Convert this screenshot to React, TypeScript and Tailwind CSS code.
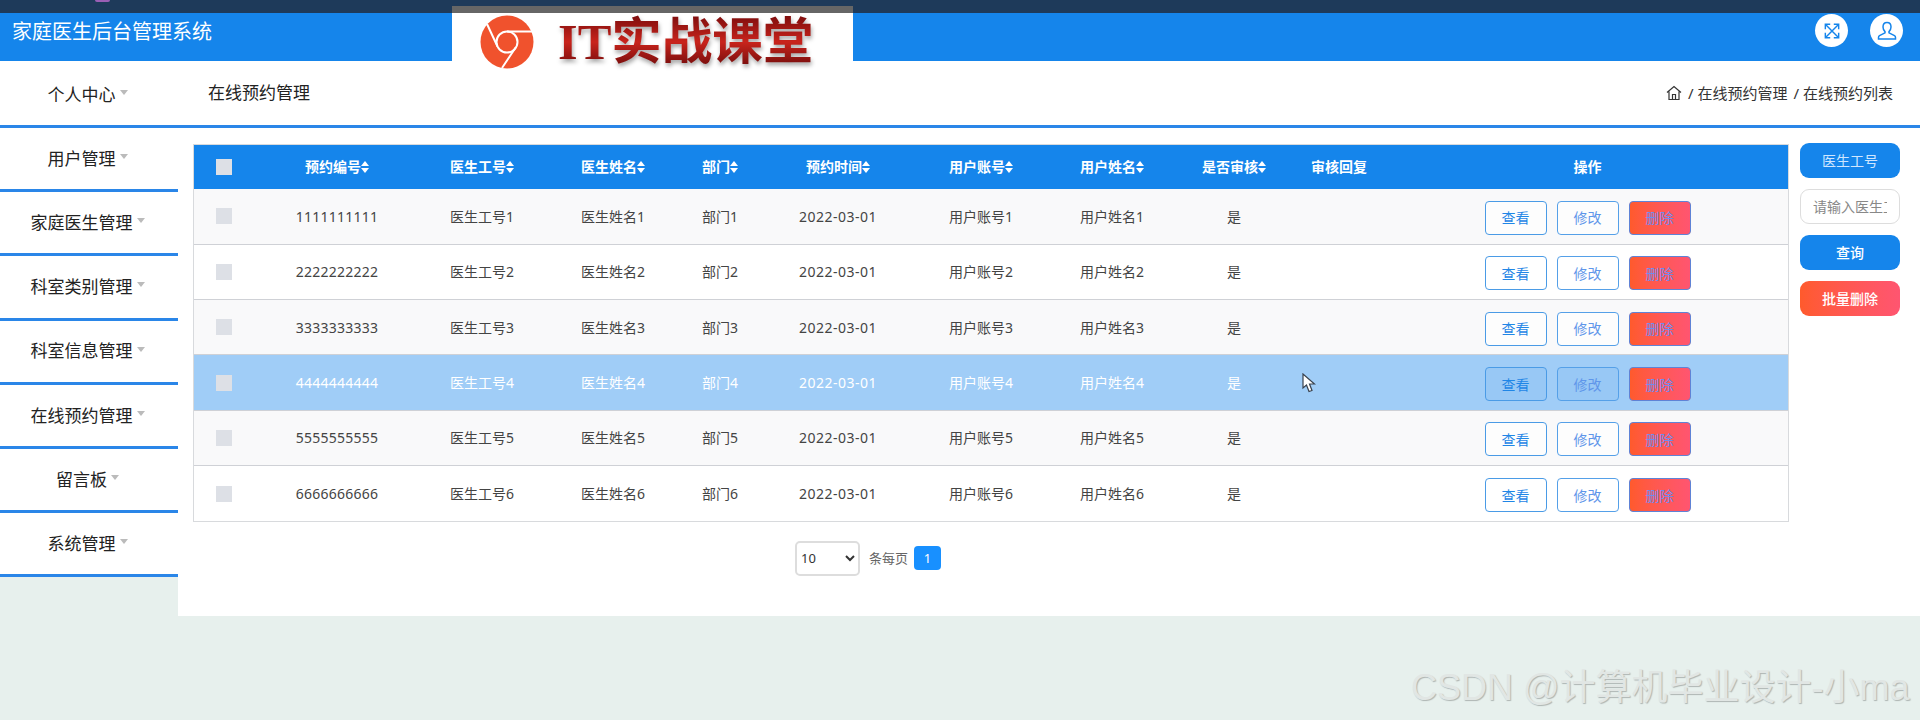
const headers = ["预约编号", "医生工号", "医生姓名", "部门", "预约时间", "用户账号", "用户姓名", "是否审核"];
const menu = ["用户管理", "家庭医生管理", "科室类别管理", "科室信息管理", "在线预约管理", "留言板", "系统管理"];
const rows = [1, 2, 3, 4, 5, 6];

const Caret = () => <span className="ml-[4px] mr-[-3px] mt-[-4px] inline-block border-x-[4px] border-t-[5px] border-x-transparent border-t-[#bbbbbb]" />;

const SortIcon = () => (
    <svg width="8" height="12" viewBox="0 0 8 12" className="inline-block align-[-1px]" fill="white">
        <path d="M4 0 L8 5 H0 Z" />
        <path d="M4 12 L8 7 H0 Z" />
    </svg>
);

const ChromeMark = () => (
    <svg width="54" height="54" viewBox="0 0 54 54">
        <circle cx="27" cy="27" r="26.5" fill="#f0522d" />
        <circle cx="27" cy="27" r="10.5" fill="none" stroke="white" strokeWidth="2" />
        <path d="M27 16.5 H52 M17.5 31.5 L7 9 M36 32 L22 53" stroke="white" strokeWidth="2" fill="none" />
    </svg>
);

const Row = ({ n }: { n: number }) => {
    const active = n === 4;
    const tone = active ? "bg-[#a0cdf7] text-white" : n % 2 === 1 ? "bg-[#f9f9fa] text-[#444444]" : "bg-white text-[#444444]";
    const btn = active ? "bg-[#98c8f5]" : "bg-white/60";
    return (
        <tr className={`h-[55.33px] border-b border-[#cfd1d6] last:border-b-0 text-center ${tone}`}>
            <td>
                <span className="mx-auto block size-4 bg-[#dde0e6]" />
            </td>
            <td className="tracking-[0.25px]">{String(n).repeat(10)}</td>
            <td>医生工号{n}</td>
            <td>医生姓名{n}</td>
            <td>部门{n}</td>
            <td className="tracking-[0.5px]">2022-03-01</td>
            <td>用户账号{n}</td>
            <td>用户姓名{n}</td>
            <td>是</td>
            <td></td>
            <td>
                <div className="mt-[3px] flex items-center justify-center gap-[10px] pr-[3px]">
                    <button className={`h-[34px] w-[62px] rounded-[4px] border border-[#4a9be6] text-[#1f86e6] ${btn}`}>查看</button>
                    <button className={`h-[34px] w-[62px] rounded-[4px] border border-[#55a0e8] text-[#5f96ea] ${btn}`}>修改</button>
                    <button className="h-[34px] w-[62px] rounded-[4px] border border-[#5f83d6] bg-gradient-to-r from-[#ff5a2c] to-[#ff5570] text-[#6f8bf0]">删除</button>
                </div>
            </td>
        </tr>
    );
};

export default function App() {
    return (
        <div className="relative h-[720px] w-[1920px] overflow-hidden bg-[#e7f0ed] font-['Noto_Sans','Noto_Sans_CJK_SC',sans-serif] text-[14px]">
            <div className="h-[13px] bg-[#1e3a5a]">
                <div className="ml-[95px] h-[2px] w-[15px] rounded-b-full bg-[#9a5fb5]" />
            </div>
            <header className="flex h-[48px] items-start justify-between bg-[#1585eb] pl-[12px] pr-[17px]">
                <h1 className="mt-[5px] text-[20px] leading-[28px] font-normal text-white">家庭医生后台管理系统</h1>
                <div className="flex gap-[22px] pt-[1px]">
                    <span className="flex size-[33px] items-center justify-center rounded-full bg-white">
                        <svg width="16" height="16" viewBox="0 0 18 18" fill="none" stroke="#1585eb" strokeWidth="1.6">
                            <path d="M2 2 L16 16 M16 2 L2 16" />
                            <path d="M1.5 7 V1.5 H7 M11 1.5 H16.5 V7 M16.5 11 V16.5 H11 M7 16.5 H1.5 V11" />
                        </svg>
                    </span>
                    <span className="flex size-[33px] items-center justify-center rounded-full bg-white">
                        <svg width="20" height="20" viewBox="0 0 20 20" fill="none" stroke="#1585eb" strokeWidth="1.5">
                            <path d="M10 1.5 C7.5 1.5 6 3.4 6 6 C6 8 7 9.6 8 10.6 V11.8 L2.5 14.6 C1.8 15 1.5 15.6 1.5 16.4 V18 H18.5 V16.4 C18.5 15.6 18.2 15 17.5 14.6 L12 11.8 V10.6 C13 9.6 14 8 14 6 C14 3.4 12.5 1.5 10 1.5 Z" />
                        </svg>
                    </span>
                </div>
            </header>

            <div className="flex items-start">
                <aside className="w-[178px] bg-white text-[17px] text-[#222222]">
                    <div className="flex h-[64px] items-center justify-center pt-[3px] pr-[6px]">
                        个人中心
                        <Caret />
                    </div>
                    <div className="h-[3px] bg-[#2a86e8]" />
                    {menu.map((m) => (
                        <div key={m} className="flex h-[64.2px] items-center justify-center border-b-[3px] border-[#2a86e8] pr-[6px]">
                            {m}
                            <Caret />
                        </div>
                    ))}
                </aside>

                <main className="h-[555px] flex-1 bg-white">
                    <div className="flex h-[67px] items-center justify-between border-b-[3px] border-[#2a86e8] pl-[30px] pr-[27px]">
                        <span className="text-[17px] text-[#222222]">在线预约管理</span>
                        <span className="flex items-center gap-[6px] text-[15px] text-[#333333]">
                            <svg width="16" height="16" viewBox="0 0 16 16" fill="none" stroke="#333333" strokeWidth="1.2">
                                <path d="M1 7.5 L8 1.5 L15 7.5 M3 6.5 V14.5 H13 V6.5 M6.5 14.5 V9.5 H9.5 V14.5" />
                            </svg>
                            <span>/ 在线预约管理</span>
                            <span>/ 在线预约列表</span>
                        </span>
                    </div>

                    <div className="flex items-start pl-[15px]">
                        <div className="mt-[16px]">
                            <div className="w-[1596px] border border-[#d8dadd]">
                                <table className="w-[1594px] table-fixed border-collapse">
                                    <colgroup>
                                        <col className="w-[60px]" />
                                        <col className="w-[166px]" />
                                        <col className="w-[124px]" />
                                        <col className="w-[138px]" />
                                        <col className="w-[76px]" />
                                        <col className="w-[160px]" />
                                        <col className="w-[126px]" />
                                        <col className="w-[136px]" />
                                        <col className="w-[108px]" />
                                        <col className="w-[102px]" />
                                        <col className="w-[398px]" />
                                    </colgroup>
                                    <thead>
                                        <tr className="h-[44px] bg-[#1585eb] text-center font-bold text-white">
                                            <th>
                                                <span className="mx-auto block size-4 bg-[#dde0e6]" />
                                            </th>
                                            {headers.map((h) => (
                                                <th key={h} className="pb-[2px]">
                                                    {h}
                                                    <SortIcon />
                                                </th>
                                            ))}
                                            <th className="pb-[2px]">审核回复</th>
                                            <th className="pb-[2px] pr-[3px]">操作</th>
                                        </tr>
                                    </thead>
                                    <tbody>
                                        {rows.map((n) => (
                                            <Row key={n} n={n} />
                                        ))}
                                    </tbody>
                                </table>
                            </div>
                            <div className="ml-[602px] mt-[19px] flex items-center text-[13px]">
                                <select defaultValue="10" className="h-[35px] w-[65px] rounded-[5px] border-2 border-[#dddddd] text-[#333333]">
                                    <option>10</option>
                                    <option>20</option>
                                </select>
                                <span className="ml-[9px] text-[#666666]">条每页</span>
                                <span className="ml-[6px] flex h-[24px] w-[27px] items-center justify-center rounded-[4px] bg-[#1890ff] text-white">1</span>
                            </div>
                        </div>

                        <div className="ml-[11px] mt-[15px] flex w-[100px] flex-col gap-[11px]">
                            <button className="h-[35px] rounded-[9px] bg-[#1585eb] text-[#cfe6ff]">医生工号</button>
                            <input placeholder="请输入医生工号" className="h-[35px] w-full rounded-[9px] border border-[#dddddd] bg-white px-[12px] placeholder:text-[#888888]" />
                            <button className="h-[35px] rounded-[9px] bg-[#1585eb] font-medium text-white">查询</button>
                            <button className="h-[35px] rounded-[9px] bg-gradient-to-r from-[#ff5a2c] to-[#ff5570] font-medium text-white">批量删除</button>
                        </div>
                    </div>
                </main>
            </div>

            {/* stuff pasted over the recording */}
            <div className="absolute left-[452px] top-[6px] h-[69px] w-[401px] bg-white">
                <div className="h-[7px] bg-[#666666]" />
                <div className="flex items-center pl-[28px] pt-[2px]">
                    <ChromeMark />
                    <span className="ml-[24px] bg-gradient-to-b from-[#7d0d0d] via-[#c9241c] to-[#6e0b0b] bg-clip-text font-['Liberation_Serif','Noto_Sans_CJK_SC',serif] text-[50.5px] font-bold leading-[54px] text-transparent drop-shadow-[1px_3px_2px_rgba(0,0,0,0.35)]">
                        IT实战课堂
                    </span>
                </div>
            </div>

            <svg className="absolute left-[1302px] top-[373px]" width="14" height="20" viewBox="0 0 14 20">
                <path d="M1 1 V15 L4.5 12 L7 18.5 L10 17.5 L7.5 11 H12.5 Z" fill="white" stroke="#39424e" strokeWidth="1.2" />
            </svg>

            <div className="absolute left-[1411px] top-[664px] whitespace-nowrap font-['Liberation_Sans','Noto_Sans_CJK_SC',sans-serif] text-[36px] leading-[48px] text-[#e1e6e4] [text-shadow:1px_1px_1px_#aeb5b3]">
                CSDN @计算机毕业设计-小ma
            </div>
        </div>
    );
}
